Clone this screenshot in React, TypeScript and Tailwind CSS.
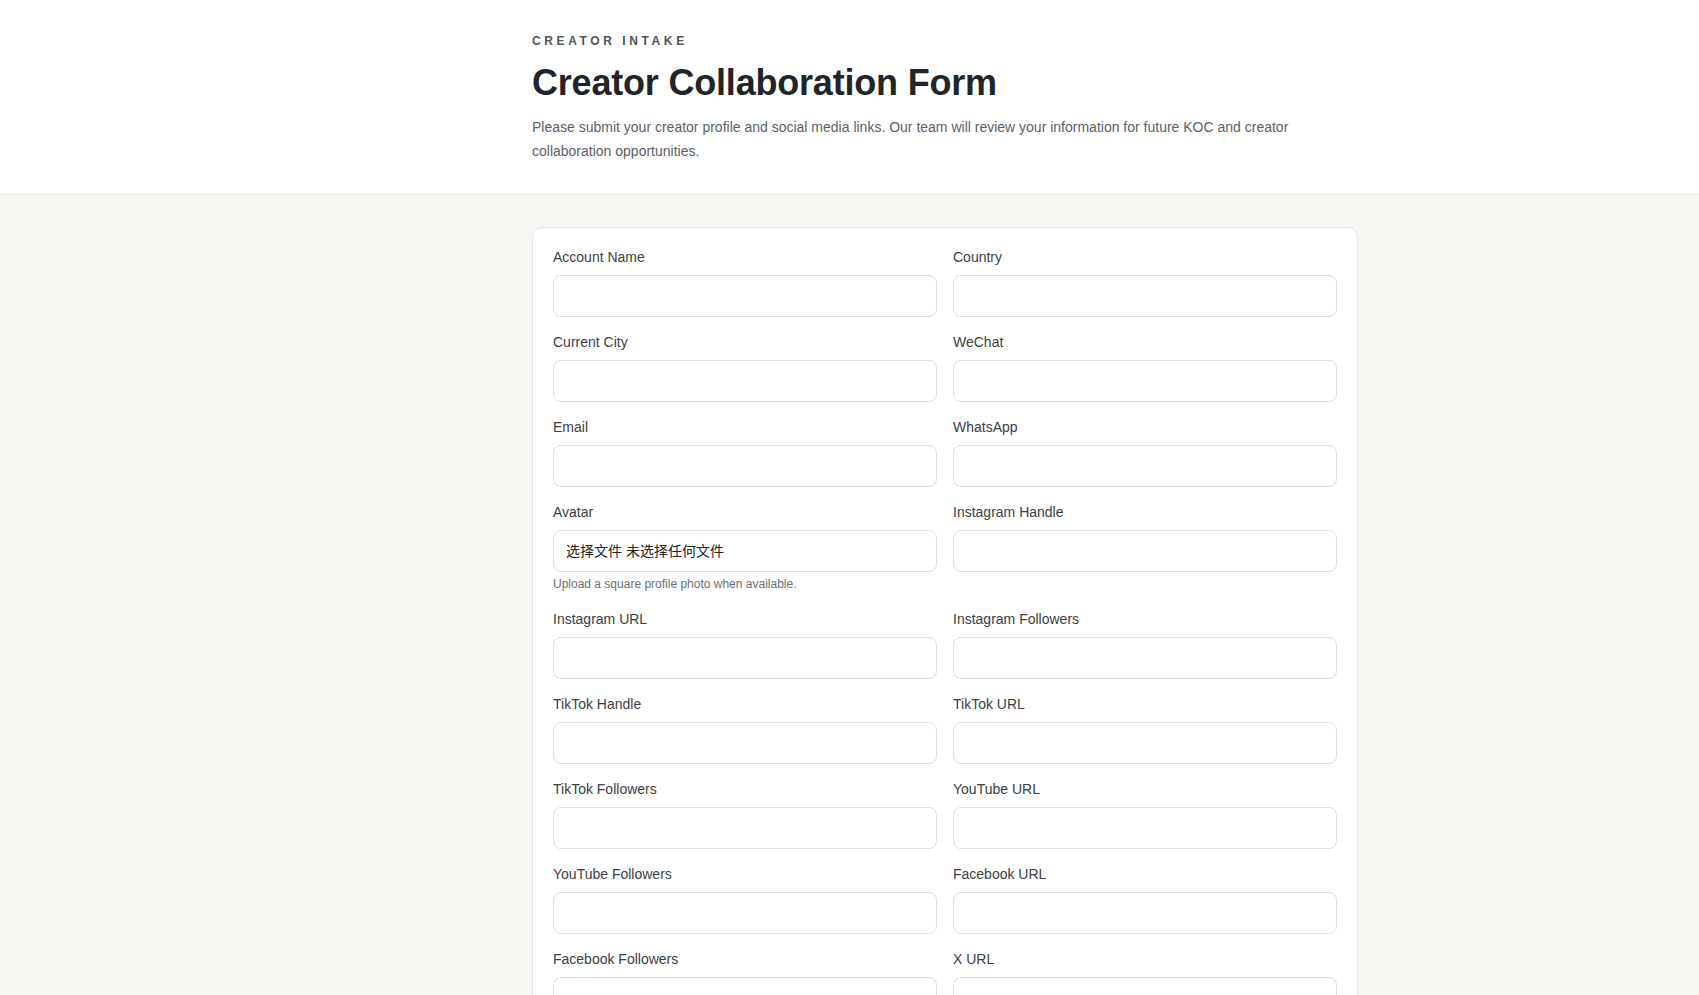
const fields: { label: string; file?: boolean; hint?: string }[] = [
  { label: "Account Name" },
  { label: "Country" },
  { label: "Current City" },
  { label: "WeChat" },
  { label: "Email" },
  { label: "WhatsApp" },
  { label: "Avatar", file: true, hint: "Upload a square profile photo when available." },
  { label: "Instagram Handle" },
  { label: "Instagram URL" },
  { label: "Instagram Followers" },
  { label: "TikTok Handle" },
  { label: "TikTok URL" },
  { label: "TikTok Followers" },
  { label: "YouTube URL" },
  { label: "YouTube Followers" },
  { label: "Facebook URL" },
  { label: "Facebook Followers" },
  { label: "X URL" },
  { label: "X Followers" },
  { label: "Content Category" },
];

const Field = ({ label, file, hint }: { label: string; file?: boolean; hint?: string }) => (
  <div className="flex flex-col">
    <label className="text-[14px] leading-[19px] text-[#3b4043] mb-[8px]">{label}</label>
    {file ? (
      <div className="h-[42px] rounded-[8px] border border-[#dedede] bg-white flex items-center px-3 text-[14px] text-[#222] font-['Liberation_Sans','Noto_Sans_CJK_SC',sans-serif]">
        <span>选择文件</span>
        <span className="ml-1">未选择任何文件</span>
      </div>
    ) : (
      <input
        type="text"
        className="h-[42px] w-full rounded-[8px] border border-[#dedede] bg-white px-3 text-[14px] outline-none"
      />
    )}
    {hint && <p className="mt-[3px] text-[12px] leading-[19px] text-[#6a6f73]">{hint}</p>}
  </div>
);

export default function App() {
  return (
    <div className="min-h-screen bg-[#f6f6f2] font-['Liberation_Sans','Noto_Sans_CJK_SC',sans-serif]">
      <header className="bg-white border-b border-[#e7e7e3] pt-[33px] pb-[31px]">
        <div className="ml-[532px] w-[826px]">
          <div className="text-[12px] leading-[16px] font-bold tracking-[0.3em] text-[#4f5559]">CREATOR INTAKE</div>
          <h1 className="mt-3 text-[36px] leading-[43px] font-bold tracking-[-0.2px] text-[#1f2528]">
            Creator Collaboration Form
          </h1>
          <p className="mt-[11px] text-[14px] leading-[24px] text-[#5c6166]">
            Please submit your creator profile and social media links. Our team will review your information for future KOC and
            creator collaboration opportunities.
          </p>
        </div>
      </header>
      <main className="pt-8 pb-16">
        <div className="ml-[532px] w-[826px] rounded-[10px] border border-[#e6e5e0] bg-white p-5">
          <div className="grid grid-cols-2 gap-x-4 gap-y-4">
            {fields.map((f) => (
              <Field key={f.label} {...f} />
            ))}
          </div>
        </div>
      </main>
    </div>
  );
}
